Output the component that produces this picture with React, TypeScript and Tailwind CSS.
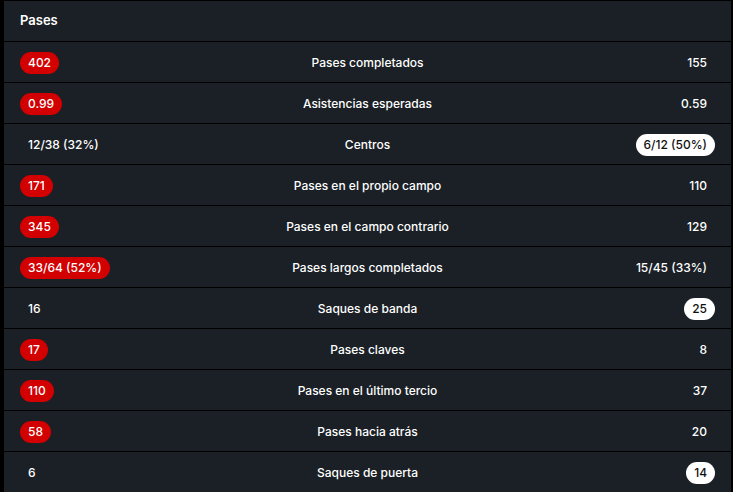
import React from 'react';

type Side = 'red' | 'white' | null;

interface Stat {
  label: string;
  home: string;
  away: string;
  hl: 'home' | 'away' | null;
}

const stats: Stat[] = [
  { label: 'Pases completados', home: '402', away: '155', hl: 'home' },
  { label: 'Asistencias esperadas', home: '0.99', away: '0.59', hl: 'home' },
  { label: 'Centros', home: '12/38 (32%)', away: '6/12 (50%)', hl: 'away' },
  { label: 'Pases en el propio campo', home: '171', away: '110', hl: 'home' },
  { label: 'Pases en el campo contrario', home: '345', away: '129', hl: 'home' },
  { label: 'Pases largos completados', home: '33/64 (52%)', away: '15/45 (33%)', hl: 'home' },
  { label: 'Saques de banda', home: '16', away: '25', hl: 'away' },
  { label: 'Pases claves', home: '17', away: '8', hl: 'home' },
  { label: 'Pases en el último tercio', home: '110', away: '37', hl: 'home' },
  { label: 'Pases hacia atrás', home: '58', away: '20', hl: 'home' },
  { label: 'Saques de puerta', home: '6', away: '14', hl: 'away' },
];

const Value = ({ value, badge }: { value: string; badge: Side }) => {
  if (badge === 'red') {
    return (
      <span className="inline-flex h-[22px] items-center rounded-full bg-[#d20000] px-2 text-white">
        {value}
      </span>
    );
  }
  if (badge === 'white') {
    return (
      <span className="inline-flex h-[22px] items-center rounded-full bg-white px-2 text-[#111]">
        {value}
      </span>
    );
  }
  return <span className="inline-flex h-[22px] items-center px-2 text-white">{value}</span>;
};

export default function App() {
  return (
    <div className="min-h-screen bg-black pl-1 pr-[2px] pt-px" style={{ fontFamily: 'Inter, "Noto Sans", sans-serif' }}>
      <div className="bg-[#1a2025] text-[12px] font-medium">
        {/* Header */}
        <div className="flex h-10 items-center px-4 text-[13px] font-semibold text-white">Pases</div>

        {stats.map((s) => (
          <div key={s.label} className="flex h-[41px] items-center border-t border-black px-4 pt-px">
            <div className="flex flex-1 justify-start">
              <Value value={s.home} badge={s.hl === 'home' ? 'red' : null} />
            </div>
            <div className="text-center text-white">{s.label}</div>
            <div className="flex flex-1 justify-end">
              <Value value={s.away} badge={s.hl === 'away' ? 'white' : null} />
            </div>
          </div>
        ))}
      </div>
    </div>
  );
}
